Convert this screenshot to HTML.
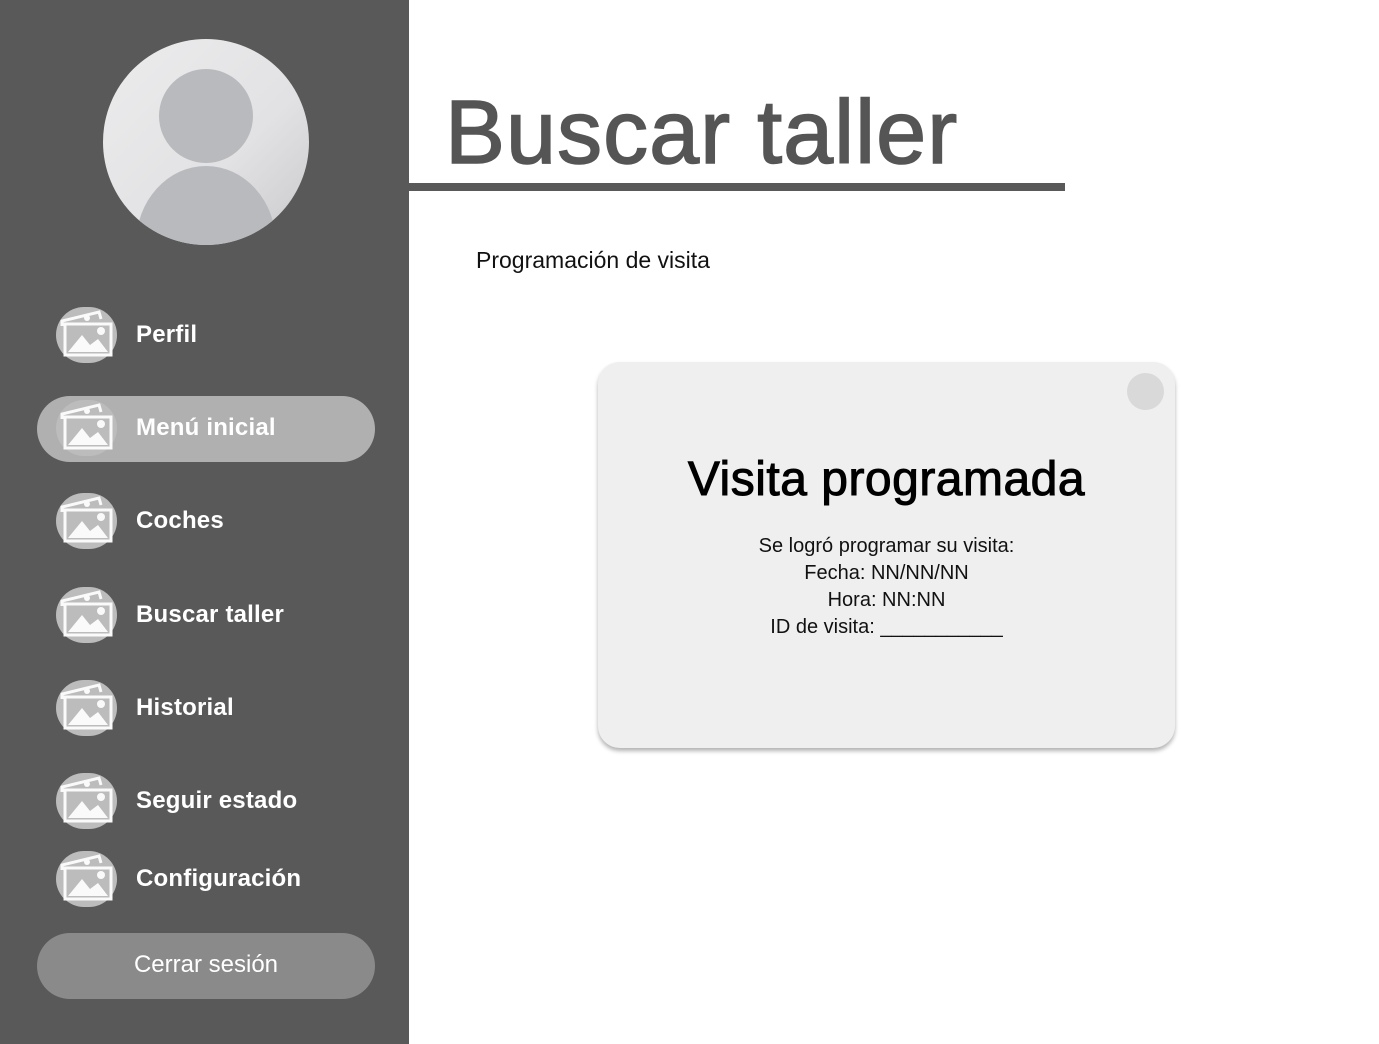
<!DOCTYPE html>
<html><head><meta charset="utf-8"><style>
*{margin:0;padding:0;box-sizing:border-box}
body{width:1379px;height:1044px;position:relative;background:#fff;font-family:"Liberation Sans",sans-serif;overflow:hidden}
.side{position:absolute;left:0;top:0;width:409px;height:1044px;background:#595959}
.item{position:absolute;left:0;width:409px;height:66px}
.item .ic{position:absolute;left:56px;top:5px;width:61px;height:56px;border-radius:28px;background:#bcbcbc}
.item .tx{position:absolute;left:136px;top:0;line-height:66px;color:#fff;font-size:24px;font-weight:bold;letter-spacing:0.2px}
.pill{position:absolute;left:37px;width:338px;height:66px;border-radius:33px}
.abs{position:absolute}
</style></head><body>
<div class="side">
 <svg class="abs" style="left:103px;top:39px" width="206" height="206" viewBox="0 0 206 206">
  <defs><linearGradient id="g" x1="0" y1="0" x2="1" y2="1"><stop offset="0" stop-color="#ececed"/><stop offset="0.6" stop-color="#e2e2e4"/><stop offset="1" stop-color="#c9c9cc"/></linearGradient>
  <clipPath id="c"><circle cx="103" cy="103" r="103"/></clipPath></defs>
  <circle cx="103" cy="103" r="103" fill="url(#g)"/>
  <g clip-path="url(#c)"><circle cx="103" cy="77" r="47" fill="#b9babd"/><ellipse cx="103" cy="205" rx="70" ry="78" fill="#b9babd"/></g>
 </svg>
 <div class="pill" style="top:396px;background:#b0b0b0"></div>
 <div class="pill" style="top:933px;background:#8a8a8a;color:#fff;font-size:24px;text-align:center;line-height:64px">Cerrar sesión</div>
</div>
<div id="items"></div>
<div class="abs" style="left:445px;top:78px;font-size:90px;color:#555;line-height:110px;letter-spacing:1px;-webkit-text-stroke:1.5px #555">Buscar taller</div>
<div class="abs" style="left:409px;top:183px;width:656px;height:8px;background:#595959"></div>
<div class="abs" style="left:476px;top:247px;font-size:23px;color:#111">Programación de visita</div>
<div class="abs" style="left:598px;top:362px;width:577px;height:386px;border-radius:22px;background:#efefef;box-shadow:0 3px 4px rgba(0,0,0,0.3)">
 <div class="abs" style="left:529px;top:11px;width:37px;height:37px;border-radius:50%;background:#d9d9d9"></div>
 <div class="abs" style="left:0;width:577px;top:90px;text-align:center;font-size:48px;color:#000;-webkit-text-stroke:1px #000;letter-spacing:0.5px">Visita programada</div>
 <div class="abs" style="left:0;width:577px;top:171px;text-align:center;font-size:20px;line-height:27px;color:#111">Se logró programar su visita:<br>Fecha: NN/NN/NN<br>Hora: NN:NN<br>ID de visita: ___________</div>
</div>
<script>
var d=[["Perfil",302],["Menú inicial",395],["Coches",488],["Buscar taller",582],["Historial",675],["Seguir estado",768],["Configuración",846]];
var ic='<svg width="61" height="56" viewBox="0 0 61 56"><g fill="none" stroke="#fafafa" stroke-width="3"><path d="M6 19 L6 14 L43 5 L45 12"/><rect x="9" y="17" width="46" height="31"/></g><path d="M12 45 L26 28 L34 38 L42 32 L52 45 Z" fill="#fafafa"/><circle cx="45" cy="24" r="4" fill="#fafafa"/><circle cx="31" cy="11" r="3" fill="#fafafa"/></svg>';
var h='';d.forEach(function(x){h+='<div class="item" style="top:'+x[1]+'px"><div class="ic">'+ic+'</div><div class="tx">'+x[0]+'</div></div>'});
document.getElementById('items').innerHTML=h;
</script>
</body></html>
